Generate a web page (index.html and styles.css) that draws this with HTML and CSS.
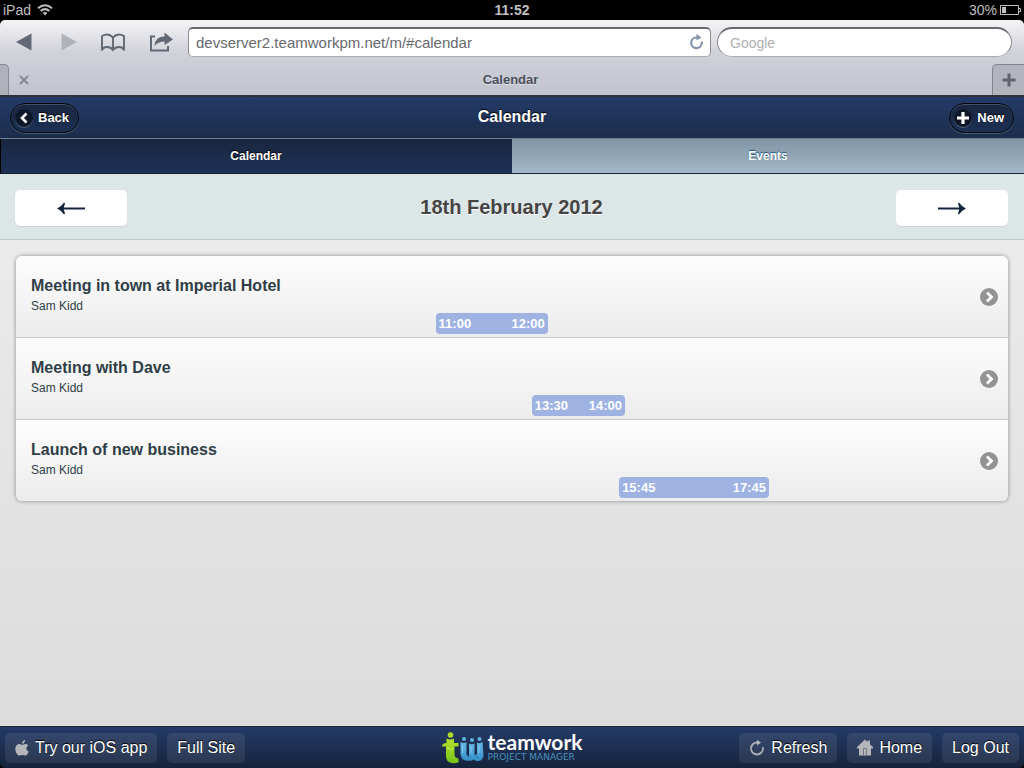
FILE: index.html
```html
<!DOCTYPE html>
<html lang="en">
<head>
<meta charset="utf-8">
<meta name="viewport" content="width=device-width, initial-scale=1">
<title>Calendar</title>
<link rel="stylesheet" href="styles.css">
</head>
<body>
<div class="status">
  <div class="status-side">iPad
    <svg width="16" height="12" viewBox="0 0 16 12" fill="none" stroke="#bfbfbf" stroke-width="2"><path d="M1 4.3Q8-1.8 15 4.3M3.6 7Q8 3.3 12.400 7"/><path d="M5.600 8.800Q8 7 10.400 8.800L8 11.500Z" fill="#bfbfbf" stroke="none"/></svg>
  </div>
  <div class="status-time">11:52</div>
  <div class="status-side status-right">30%
    <svg width="21" height="10" viewBox="0 0 21 10" fill="none" stroke="#bfbfbf"><path d="M.5.500H18.500V9.500H.5ZM19 3.500H20.500V6.500H19"/><path d="M2 2H6V8H2Z" fill="#bfbfbf" stroke="none"/></svg>
  </div>
</div>
<div class="browser">
  <div class="toolbar">
    <div class="tools">
      <button class="tool" aria-label="Previous page"><svg width="16" height="18" viewBox="0 0 16 18"><path d="M0 9 15.500.5V17.500Z" fill="#626974"/></svg></button>
      <button class="tool" aria-label="Next page"><svg width="16" height="18" viewBox="0 0 16 18"><path d="M.5.500 16 9 .5 17.500Z" fill="#b0b3ba"/></svg></button>
      <button class="tool" aria-label="Bookmarks"><svg width="26" height="19" viewBox="0 0 26 19" fill="none" stroke="#626974" stroke-width="1.900"><path d="M13 4.500V16.500M13 4.500Q8.500-.5 2 3V17.500Q3 14 7 14 11 14 13 17 15 14 19 14 23 14 24 17.500V3Q17.500-.5 13 4.500"/></svg></button>
      <button class="tool" aria-label="Share"><svg width="24" height="20" viewBox="0 0 24 20"><path d="M6 4.500H2V18.500H19V14" fill="none" stroke="#626974" stroke-width="2"/><path d="M5.500 14Q6 4.500 15.500 4.500V.5L24 7.500 15.500 13V9.500Q9 9.500 5.500 14Z" fill="#626974"/></svg></button>
    </div>
    <div class="address">
      <input class="address-input" aria-label="Address" value="devserver2.teamworkpm.net/m/#calendar">
      <button class="reload" aria-label="Reload page"><svg width="15" height="16" viewBox="0 0 15 16"><path d="M9 3.500H7.500A5.300 5.300 0 1 0 12.800 9V7.500" fill="none" stroke="#8493ad" stroke-width="2.200"/><path d="M7.500 0 12.500 3.500 7.500 6.500Z" fill="#8493ad"/></svg></button>
    </div>
    <input class="search" aria-label="Search" placeholder="Google">
  </div>
  <div class="tabs">
    <div class="tab-edge"></div>
    <div class="tab">
      <button class="tab-close" aria-label="Close tab"><svg width="10" height="10" viewBox="0 0 10 10"><path d="M1 1 9 9M9 1 1 9" stroke="#858891" stroke-width="1.800"/></svg></button>
      <span class="tab-title">Calendar</span>
    </div>
    <button class="tab-add" aria-label="New tab"><svg width="14" height="14" viewBox="0 0 14 14"><path d="M7 .5V13.500M.5 7H13.500" stroke="#5d626c" stroke-width="3"/></svg></button>
  </div>
</div>

<header class="header">
  <div class="header-side"><button class="pill"><span class="pill-icon"><svg width="8" height="12" viewBox="0 0 8 12"><path d="M6.500 1.500 2 6 6.500 10.500" fill="none" stroke="#fff" stroke-width="2.600"/></svg></span>Back</button></div>
  <h1 class="header-title">Calendar</h1>
  <div class="header-side header-right"><button class="pill"><span class="pill-icon"><svg width="12" height="12" viewBox="0 0 12 12"><path d="M6 0V12M0 6H12" stroke="#fff" stroke-width="3.200"/></svg></span>New</button></div>
</header>
<nav class="navbar">
  <a class="nav-item nav-active" href="#calendar">Calendar</a>
  <a class="nav-item" href="#events">Events</a>
</nav>
<section class="datebar">
  <button class="arrow" aria-label="Previous day"><svg width="28" height="13" viewBox="0 0 28 13"><path d="M4 6.500H28" stroke="#14233d" stroke-width="2"/><path d="M0 6.500Q4.500 4.500 7 .5L8 1.500 6.500 6.500 8 11.500 7 12.500Q4.500 8.500 0 6.500Z" fill="#14233d"/></svg></button>
  <h2 class="date">18th February 2012</h2>
  <button class="arrow" aria-label="Next day"><svg width="28" height="13" viewBox="0 0 28 13"><path d="M0 6.500H24" stroke="#14233d" stroke-width="2"/><path d="M28 6.500Q23.500 4.500 21 .5L20 1.500 21.500 6.500 20 11.500 21 12.500Q23.500 8.500 28 6.500Z" fill="#14233d"/></svg></button>
</section>
<main class="content">
  <ul class="list">
    <li class="row"><a class="row-link" href="#event1">
      <h3 class="row-title">Meeting in town at Imperial Hotel</h3>
      <p class="row-person">Sam Kidd</p>
      <div class="slot" style="margin-left:42.3%;width:11.3%"><span>11:00</span><span>12:00</span></div>
      <svg class="chevron" width="18" height="18" viewBox="0 0 18 18"><circle cx="9" cy="9" r="9" fill="#939393"/><path d="M7 4.500 11.500 9 7 13.500" fill="none" stroke="#fff" stroke-width="2.800"/></svg>
    </a></li>
    <li class="row"><a class="row-link" href="#event2">
      <h3 class="row-title">Meeting with Dave</h3>
      <p class="row-person">Sam Kidd</p>
      <div class="slot" style="margin-left:52%;width:9.4%"><span>13:30</span><span>14:00</span></div>
      <svg class="chevron" width="18" height="18" viewBox="0 0 18 18"><circle cx="9" cy="9" r="9" fill="#939393"/><path d="M7 4.500 11.500 9 7 13.500" fill="none" stroke="#fff" stroke-width="2.800"/></svg>
    </a></li>
    <li class="row"><a class="row-link" href="#event3">
      <h3 class="row-title">Launch of new business</h3>
      <p class="row-person">Sam Kidd</p>
      <div class="slot" style="margin-left:60.8%;width:15.1%"><span>15:45</span><span>17:45</span></div>
      <svg class="chevron" width="18" height="18" viewBox="0 0 18 18"><circle cx="9" cy="9" r="9" fill="#939393"/><path d="M7 4.500 11.500 9 7 13.500" fill="none" stroke="#fff" stroke-width="2.800"/></svg>
    </a></li>
  </ul>
</main>
<footer class="footer">
  <div class="footer-side">
    <a class="foot-btn" href="#app"><svg width="14" height="16" viewBox="0 0 14 16" fill="#b4b6ba"><path d="M7 4.800C8 4.800 9 3.900 10.300 3.900 11.600 3.900 12.700 4.600 13.200 5.400 10.500 7 11 10.400 13.700 11.500 13 13.300 11.700 15.500 10.300 15.500 9.200 15.500 8.500 14.900 7.300 14.900 6 14.900 5.500 15.500 4.400 15.500 2.500 15.500.3 12 .3 8.900.3 5.700 2.300 4 4.300 4 5.400 4 6.300 4.800 7 4.800Z"/><path d="M7 3.700C6.900 1.800 8.400.2 10.100 0 10.400 1.900 8.700 3.800 7 3.700Z"/></svg>Try our iOS app</a>
    <a class="foot-btn" href="#full">Full Site</a>
  </div>
  <div class="logo">
    <svg width="42" height="32" viewBox="0 0 42 32">
      <defs>
        <linearGradient id="green" x2="0" y2="1"><stop stop-color="#b5e02c"/><stop offset="1" stop-color="#78c41a"/></linearGradient>
        <linearGradient id="blue" x2="0" y2="1"><stop stop-color="#67b9e8"/><stop offset="1" stop-color="#338fc9"/></linearGradient>
      </defs>
      <circle cx="8.500" cy="3" r="2.800" fill="#aedb2a"/>
      <path d="M4.500 6.500Q8.500 8.500 12 6.500V11H16.500V14.500H12.500V22Q12.500 26 16.500 26.500V30.500Q10 32.500 6 29.500 3.500 27.500 4 20V14.500H0Q0 11 4.500 11Z" fill="url(#green)"/>
      <path d="M5 16Q9 19 12 16" stroke="#caee63" fill="none"/>
      <g fill="#5fb4e6"><circle cx="22" cy="7" r="2"/><circle cx="30" cy="8" r="2"/><circle cx="37.500" cy="7" r="2"/></g>
      <path d="M18.500 10Q22 12 24.500 10V22Q25 25 27 24V11.500Q30 13 32.500 11.500V22Q33 24 35 22V10.500Q38 12 40.500 10L41.500 24Q40.500 29 36 29 33 29 32 27.500 30 29 27.500 28.500 19.500 30 18.500 22Z" fill="url(#blue)"/>
      <path d="M20.500 13V21M29 14V21M37 13V21" stroke="#8acbf0"/>
      <path d="M24.500 22Q25 25.500 28 25M32.500 22Q33 26 37 25" stroke="#2478ae" stroke-width=".8" fill="none"/>
    </svg>
    <div class="logo-words"><span class="logo-name">teamwork</span><span class="logo-sub">PROJECT MANAGER</span></div>
  </div>
  <div class="footer-side footer-right">
    <a class="foot-btn" href="#refresh"><svg width="16" height="16" viewBox="0 0 16 16"><path d="M8.500 2.500H8A6 6 0 1 0 14 8.500V7" fill="none" stroke="#a9adb4" stroke-width="1.800"/><path d="M8 0 12 2.500 8 5.500Z" fill="#b8bbc0"/></svg>Refresh</a>
    <a class="foot-btn" href="#home"><svg width="16" height="17" viewBox="0 0 16 17"><path d="M0 8 8 .5 10.500 3V1.500H13V5.500L16 8V9.500H14V16.500H2V9.500H0Z" fill="#b4b6ba"/><path d="M6.500 16V9.500H9.500V16" stroke="#6d7481" fill="none"/></svg>Home</a>
    <a class="foot-btn" href="#logout">Log Out</a>
  </div>
</footer>
</body>
</html>
```
FILE: styles.css
```css
* { box-sizing: border-box; }
body {
  margin: 0;
  min-height: 100vh;
  display: flex;
  flex-direction: column;
  font-family: "Liberation Sans", Arial, sans-serif;
  background: #000;
  color: #2f3e46;
}
button, input { font: inherit; margin: 0; }
button { border: 0; padding: 0; background: none; color: inherit; }
svg { display: block; flex: none; }
h1, h2, h3, p, ul { margin: 0; padding: 0; }
a { color: inherit; text-decoration: none; }

.status {
  display: flex;
  align-items: center;
  height: 20px;
  padding: 0 3px;
  color: #bfbfbf;
  font-size: 14px;
}
.status-side { flex: 1; display: flex; align-items: center; gap: 6px; }
.status-right { justify-content: flex-end; gap: 3px; }
.status-time { font-weight: bold; }

.browser {
  background: linear-gradient(#f4f4f6, #d0d1d9 45%, #c1c3ce);
  border-radius: 5px 5px 0 0;
  border-bottom: 2px solid #303336;
}
.toolbar { display: flex; align-items: center; height: 44px; padding: 0 12px 0 16px; }
.tools { display: flex; align-items: center; gap: 23px; width: 172px; }
.tools .tool:nth-child(2) { margin-left: 6px; }
.address { flex: 523 0 0; position: relative; }
.address-input, .search {
  display: block;
  width: 100%;
  height: 30px;
  border: 1px solid #8a8c92;
  border-top: 2px solid #68696d;
  border-bottom-color: #aaacb2;
  background: #fff;
  color: #68696c;
  font-size: 15px;
  outline: 0;
}
.address-input { border-radius: 5px; padding: 0 32px 0 7px; }
.reload { position: absolute; right: 7px; top: 7px; }
.search { flex: 269 0 0; width: 0; margin-left: 6px; border-radius: 15px; padding: 0 12px; font-size: 14px; }
.search::placeholder { color: #b0b0b0; opacity: 1; }
.tabs { display: flex; height: 31px; }
.tab-edge {
  width: 9px;
  background: #b0b2bb;
  border: 1px solid #888a93;
  border-width: 1px 1px 0 0;
  border-radius: 0 5px 0 0;
}
.tab { flex: 1; display: flex; align-items: center; padding-left: 10px; }
.tab-title {
  flex: 1;
  text-align: center;
  font-size: 13px;
  font-weight: bold;
  color: #4b4f59;
  text-shadow: 0 1px 0 #e0e1e6;
}
.tab-add {
  display: flex;
  align-items: center;
  justify-content: center;
  width: 32px;
  background: #b3b5be;
  border: 1px solid #83858e;
  border-width: 1px 0 0 1px;
  border-radius: 5px 0 0 0;
}

.header {
  display: flex;
  align-items: center;
  height: 41px;
  padding: 0 10px;
  background: linear-gradient(#243b68, #1b2d4b);
  color: #fff;
  text-shadow: 0 -1px 1px #000;
}
.header-side { flex: 1; display: flex; }
.header-right { justify-content: flex-end; }
.header-title { font-size: 16px; line-height: 20px; padding-bottom: 2px; }
.pill {
  display: flex;
  align-items: center;
  gap: 5px;
  height: 30px;
  padding: 0 9px 0 4px;
  border: 1px solid #05070c;
  border-radius: 15px;
  background: linear-gradient(#192640, #1d3054);
  box-shadow: 0 1px 0 #4b5a75, inset 0 1px 0 #43506a;
  font-size: 13px;
  font-weight: bold;
  text-shadow: 0 -1px 1px #000;
}
.pill-icon {
  display: flex;
  align-items: center;
  justify-content: center;
  width: 18px;
  height: 18px;
  border-radius: 9px;
  background: #0d1729;
  box-shadow: 0 1px 0 #53617b;
}
.navbar {
  display: flex;
  height: 36px;
  border-top: 1px solid #718091;
  border-bottom: 1px solid #17213a;
}
.nav-item {
  flex: 1 0 0;
  display: flex;
  align-items: center;
  justify-content: center;
  background: linear-gradient(#8195a6, #a2b7c7);
  color: #fff;
  font-size: 12px;
  font-weight: bold;
  text-shadow: 0 -1px 1px #145072;
}
.nav-active {
  background: linear-gradient(#192640, #1e3256);
  box-shadow: inset 1px 0 0 #000;
  text-shadow: 0 -1px 1px #000;
}

.datebar {
  display: flex;
  align-items: center;
  justify-content: space-between;
  height: 66px;
  padding: 2px 16px 0 15px;
  background: #dde6e7;
  border-bottom: 1px solid #b9c5cf;
}
.arrow {
  display: flex;
  align-items: center;
  justify-content: center;
  width: 112px;
  height: 36px;
  padding-top: 2px;
  background: #fff;
  border-radius: 5px;
  box-shadow: 0 1px 1px #ccd2d3;
}
.date { font-size: 20px; line-height: 24px; padding-bottom: 2px; color: #444; text-shadow: 0 1px 0 #fff; }

.content {
  flex: 1;
  padding: 16px;
  background: linear-gradient(#ebebeb, #dcdcdc);
}
.list {
  list-style: none;
  border-radius: 6px;
  overflow: hidden;
  box-shadow: 0 0 4px #888;
}
.row { background: linear-gradient(#fdfdfd, #ececec); border-bottom: 1px solid #c8c8c8; }
.row:last-child { border-bottom: 0; }
.row-link { display: block; position: relative; padding: 20px 0 3px; }
.row-title { padding-left: 15px; font-size: 16px; line-height: 20px; }
.row-person { padding-left: 15px; margin-top: 3px; font-size: 12px; line-height: 14px; }
.slot {
  display: flex;
  align-items: center;
  justify-content: space-between;
  height: 21px;
  padding: 0 3px;
  border-radius: 4px;
  background: #9eb3e2;
  color: #fff;
  font-size: 13px;
  font-weight: bold;
}
.chevron { position: absolute; right: 10px; top: 50%; margin-top: -9px; }

.footer {
  display: flex;
  align-items: center;
  height: 42px;
  padding: 0 5px;
  border-top: 1px solid #22262c;
  border-radius: 0 0 5px 5px;
  background: linear-gradient(#243b68, #16233b);
  color: #fff;
  background-clip: padding-box;
}
.footer-side { flex: 1; display: flex; gap: 10px; }
.footer-right { justify-content: flex-end; }
.foot-btn {
  display: flex;
  align-items: center;
  gap: 6px;
  height: 30px;
  padding: 0 10px;
  border-radius: 5px;
  background: linear-gradient(#33466c, #2a3750);
  font-size: 16px;
  white-space: nowrap;
  text-shadow: 0 -1px 1px #000;
}
.logo { display: flex; align-items: center; gap: 4px; }
.logo-words { display: flex; flex-direction: column; padding-bottom: 2px; }
.logo-name { font-family: Lato, sans-serif; font-size: 21px; font-weight: bold; line-height: 20px; }
.logo-sub { font-family: "DejaVu Sans", sans-serif; font-size: 9px; line-height: 10px; color: #4c90bd; }
```
